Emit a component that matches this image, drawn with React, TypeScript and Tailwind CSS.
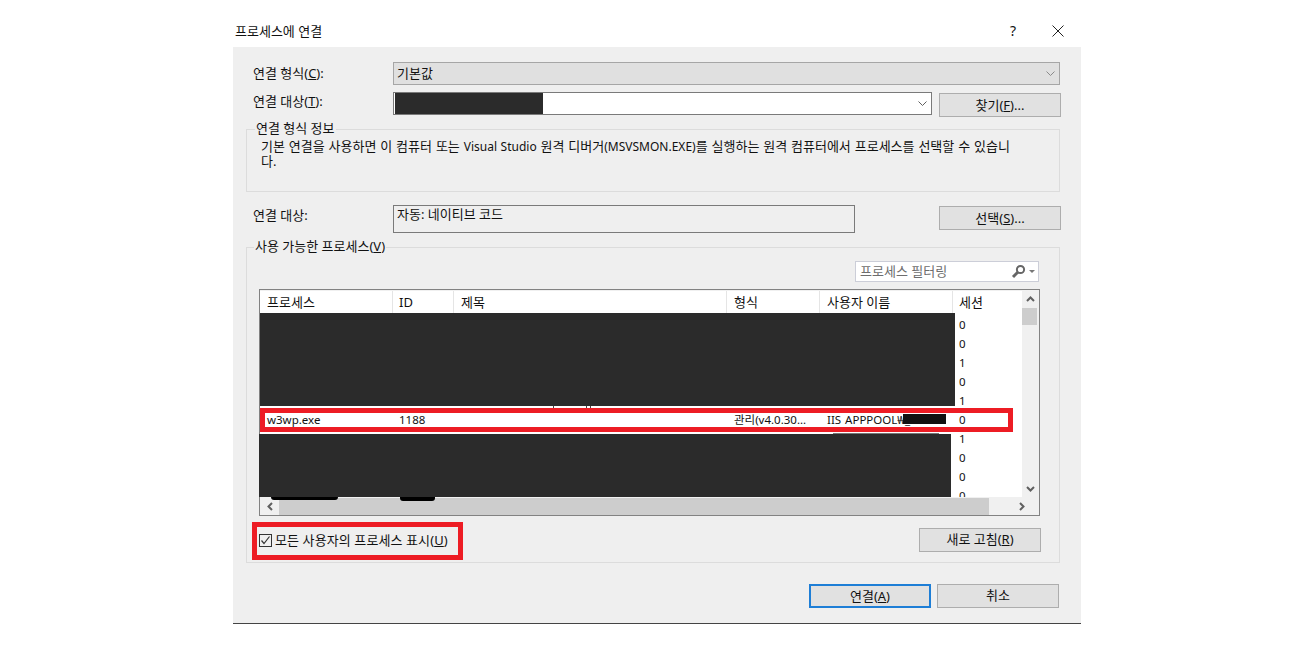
import React from "react";

const font = "font-['Noto_Sans','Noto_Sans_CJK_KR',sans-serif]";

function Btn({ children, primary, className = "" }: { children: React.ReactNode; primary?: boolean; className?: string }) {
  return (
    <div
      className={`w-[122px] h-[24px] flex items-center justify-center bg-[#e1e1e1] text-[#111] ${
        primary ? "border-2 border-[#1e7ed6]" : "border border-[#adadad]"
      } ${className}`}
    >
      {children}
    </div>
  );
}

function Chevron({ color = "#606060" }: { color?: string }) {
  return (
    <svg width="9" height="5" viewBox="0 0 9 5" fill="none" className="mr-[1px]">
      <path d="M0.5 0.5L4.5 4.5L8.5 0.5" stroke={color} strokeWidth="1" />
    </svg>
  );
}

function Arrow({ d }: { d: string }) {
  return (
    <svg width="9" height="9" viewBox="0 0 9 9" fill="none">
      <path d={d} stroke="#606060" strokeWidth="2" />
    </svg>
  );
}

const columns = ["w-[133px] pl-[7px]", "w-[61px] pl-[6px]", "w-[273px] pl-[7px]", "w-[93px] pl-[7px]", "w-[133px] pl-[7px]", "w-[69px] pl-[6px]"];
const headers = ["프로세스", "ID", "제목", "형식", "사용자 이름", "세션"];

const rows: string[][] = [
  ["", "", "", "", "", "0"],
  ["", "", "", "", "", "0"],
  ["", "", "", "", "", "1"],
  ["", "", "", "", "", "0"],
  ["", "", "", "", "", "1"],
  ["w3wp.exe", "1188", "", "관리(v4.0.30...", "IIS APPPOOL₩_", "0"],
  ["", "", "", "", "", "1"],
  ["", "", "", "", "", "0"],
  ["", "", "", "", "", "0"],
  ["", "", "", "", "", "0"],
];

export default function App() {
  return (
    <div className={`${font} w-[1300px] h-[650px] bg-white pl-[233px] text-[13px] leading-[18px] text-[#111] overflow-hidden`}>
      <div className="w-[848px] flex flex-col">
        <div className="h-[47px] flex items-center justify-between pl-[2px] pr-[17px] pt-[15px]">
          <span>프로세스에 연결</span>
          <div className="flex items-center gap-[36px]">
            <span className="text-[14px]">?</span>
            <svg width="12" height="12" viewBox="0 0 12 12" fill="none">
              <path d="M0.5 0.5L11.5 11.5M11.5 0.5L0.5 11.5" stroke="#222" strokeWidth="1" />
            </svg>
          </div>
        </div>

        <div className="h-[577px] bg-[#efefef] border-b border-[#444] px-[20px] pt-[15px] flex flex-col">
          <div className="flex items-center h-[23px]">
            <span className="w-[140px] -mt-[2px]">
              연결 형식(<u>C</u>):
            </span>
            <div className="w-[667px] h-[23px] bg-[#e0e0e0] border border-[#a6a6a6] flex items-center justify-between pl-[3px] pr-[3px]">
              <span className="-mt-[2px]">기본값</span>
              <Chevron color="#8a8a8a" />
            </div>
          </div>

          <div className="flex items-start h-[25px] mt-[7px]">
            <span className="w-[140px] leading-[18px]">
              연결 대상(<u>T</u>):
            </span>
            <div className="w-[539px] h-[23px] bg-white border border-[#7a7a7a] flex items-center justify-between pr-[3px]">
              <div className="w-[148px] h-[21px] ml-[1px] bg-[#2b2b2b]" />
              <Chevron />
            </div>
            <Btn className="ml-[7px] mt-[1px]">
              <span className="-mt-[1px]">
                찾기(<u>F</u>)...
              </span>
            </Btn>
          </div>

          <div className="relative -ml-[7px] w-[814px] h-[63px] mt-[12px] border border-[#dcdcdc] pl-[14px] pr-[40px] pt-[9px]">
            <span className="absolute left-[8px] -top-[11px] bg-[#efefef] px-[1px] leading-[18px]">연결 형식 정보</span>
            <p className="leading-[15px] [word-spacing:0.5px]">
              기본 연결을 사용하면 이 컴퓨터 또는 <span className="text-[12px]">Visual Studio</span> 원격 디버거<span className="text-[12px]">(MSVSMON.EXE)</span>를 실행하는 원격 컴퓨터에서 프로세스를 선택할 수 있습니
              <br />
              다.
            </p>
          </div>

          <div className="flex items-start h-[28px] mt-[13px]">
            <span className="w-[140px] leading-[20px]">연결 대상:</span>
            <div className="w-[462px] h-[28px] border border-[#7a7a7a] pl-[3px] pt-[1px] leading-[15px]">자동: 네이티브 코드</div>
            <Btn className="ml-[84px] mt-[1px]">
              <span className="-mt-[1px]">
                선택(<u>S</u>)...
              </span>
            </Btn>
          </div>

          <div className="relative -ml-[7px] w-[814px] h-[316px] mt-[14px] border border-[#dcdcdc] pl-[12px] pt-[13px] flex flex-col">
            <span className="absolute left-[7px] -top-[11px] bg-[#efefef] px-[1px]">
              사용 가능한 프로세스(<u>V</u>)
            </span>

            <div className="ml-[596px] w-[184px] h-[21px] bg-white border border-[#ccced8] flex items-center justify-between pl-[4px] pr-[3px] text-[#6d6d6d]">
              <span className="-mt-[2px]">프로세스 필터링</span>
              <div className="flex items-center gap-[3px]">
                <svg width="15" height="15" viewBox="0 0 15 15" fill="none">
                  <circle cx="9.5" cy="5.5" r="3.6" stroke="#666" strokeWidth="2" />
                  <path d="M7 8L2 13" stroke="#666" strokeWidth="3" />
                </svg>
                <svg width="6" height="3" viewBox="0 0 6 3">
                  <path d="M0 0H6L3 3Z" fill="#777" />
                </svg>
              </div>
            </div>

            <div className="relative w-[781px] h-[227px] mt-[7px] bg-[#f0f0f0] border border-[#828282] pt-[1px] flex flex-col">
              <div className="flex h-[206px]">
                <div className="w-[762px] bg-white flex flex-col">
                  <div className="flex h-[22px] shrink-0">
                    {headers.map((h, i) => (
                      <div key={h} className={`${columns[i]} flex items-center border-r border-[#e5e5e5] last:border-r-0`}>
                        {h}
                      </div>
                    ))}
                  </div>
                  <div className="h-[184px] overflow-hidden pt-[2px]">
                    {rows.map((r, ri) => (
                      <div key={ri} className="flex h-[19px] items-center">
                        {r.map((c, ci) => (
                          <div key={ci} className={`${columns[ci]} text-[11.5px] whitespace-nowrap [word-spacing:1px]`}>
                            {c}
                          </div>
                        ))}
                      </div>
                    ))}
                  </div>
                </div>
                <div className="w-[17px] flex flex-col items-stretch">
                  <div className="h-[17px] flex items-center justify-center">
                    <Arrow d="M1 6L4.5 2.5L8 6" />
                  </div>
                  <div className="h-[17px] bg-[#cdcdcd] w-[15px]" />
                  <div className="flex-1" />
                  <div className="h-[17px] flex items-center justify-center">
                    <Arrow d="M1 3L4.5 6.5L8 3" />
                  </div>
                </div>
              </div>
              <div className="h-[17px] flex mt-[1px]">
                <div className="w-[18px] ml-[1px] flex items-center justify-center">
                  <Arrow d="M6 1L2.5 4.5L6 8" />
                </div>
                <div className="w-[710px] bg-[#cdcdcd]" />
                <div className="w-[34px] flex items-center justify-center ml-[15px]">
                  <Arrow d="M3 1L6.5 4.5L3 8" />
                </div>
              </div>

              {/* redaction overlays */}
              <div className="absolute left-0 top-[23px] w-[695px] h-[93px] bg-[#2b2b2b]" />
              <div className="absolute -left-[1px] top-[144px] w-[692px] h-[63px] bg-[#2b2b2b]" />
              <div className="absolute left-[643px] top-[124px] w-[43px] h-[10px] bg-[#111]" />
              <div className="absolute left-[573px] top-[143px] w-[106px] h-[1px] bg-[#777]" />
              <div className="absolute left-[11px] top-[207px] w-[67px] h-[3px] rounded-b-[3px] bg-black" />
              <div className="absolute left-[140px] top-[207px] w-[35px] h-[4px] rounded-b-[3px] bg-black" />
              <div className="absolute left-[293px] top-[116px] w-[1px] h-[2px] bg-[#444]" />
              <div className="absolute left-[326px] top-[116px] w-[1px] h-[3px] bg-[#444]" />
              <div className="absolute left-[330px] top-[116px] w-[1px] h-[3px] bg-[#444]" />
              {/* red highlight */}
              <div className="absolute left-0 top-[118px] w-[753px] h-[24px] border-[5px] border-[#ed1c24]" />
            </div>

            <div className="flex items-start justify-between mt-[12px] pr-[18px]">
              <div className="relative flex items-center gap-[3px] mt-[4px] h-[17px]">
                <div className="w-[13px] h-[13px] border border-[#333] bg-[#efefef] flex items-center justify-center">
                  <svg width="11" height="11" viewBox="0 0 11 11" fill="none">
                    <path d="M1.5 5.5L4 8.5L9.5 1.5" stroke="#333" strokeWidth="1.2" />
                  </svg>
                </div>
                <span className="-mt-[2px] tracking-[0.1px]">
                  모든 사용자의 프로세스 표시(<u>U</u>)
                </span>
                <div className="absolute -left-[7px] -top-[10px] w-[211px] h-[38px] border-[5px] border-[#ed1c24]" />
              </div>
              <Btn>
                <span className="-mt-[2px]">
                  새로 고침(<u>R</u>)
                </span>
              </Btn>
            </div>
          </div>

          <div className="flex justify-end gap-[6px] mt-[21px] pr-[2px]">
            <Btn primary>
              <span className="-mt-[1px]">
                연결(<u>A</u>)
              </span>
            </Btn>
            <Btn>
              <span className="-mt-[2px]">취소</span>
            </Btn>
          </div>
        </div>
      </div>
    </div>
  );
}
